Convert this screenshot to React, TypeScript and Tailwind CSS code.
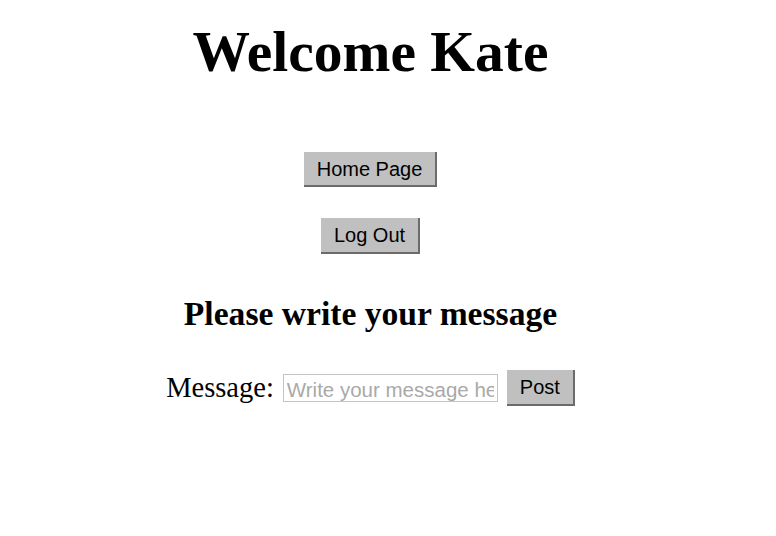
export default function App() {
  return (
    <div className="min-h-[536px] bg-white">
      <div className="w-[741px] text-center font-['Liberation_Serif',serif] text-black">
        <h1 className="pt-[18px] text-[57.5px] font-bold leading-[68px]">Welcome Kate</h1>
        <div className="mt-[66px] flex flex-col items-center gap-[31px] font-['Liberation_Sans',Arial,sans-serif]">
          <button className="h-[35px] border-r-2 border-b-2 border-[#6b6b6b] bg-[#c0c0c0] px-[13px] text-[20px] leading-none">
            Home Page
          </button>
          <button className="h-[36px] border-r-2 border-b-2 border-[#6b6b6b] bg-[#c0c0c0] px-[13px] text-[20px] leading-none">
            Log Out
          </button>
        </div>
        <h2 className="mt-[38px] text-[33.6px] font-bold leading-[44px]">Please write your message</h2>
        <div className="mt-[34px] flex items-center justify-center gap-[9px]">
          <label className="text-[28.5px] leading-none">Message:</label>
          <input
            placeholder="Write your message here"
            className="h-[28px] w-[215px] border border-[#c4c4c4] px-[3px] pt-[3px] font-['Liberation_Sans',Arial,sans-serif] text-[20.5px] leading-none outline-none placeholder:text-[#a9a9a9]"
          />
          <button className="h-[36px] border-r-2 border-b-2 border-[#6b6b6b] bg-[#c0c0c0] px-[13px] font-['Liberation_Sans',Arial,sans-serif] text-[20px] leading-none">
            Post
          </button>
        </div>
      </div>
    </div>
  );
}
